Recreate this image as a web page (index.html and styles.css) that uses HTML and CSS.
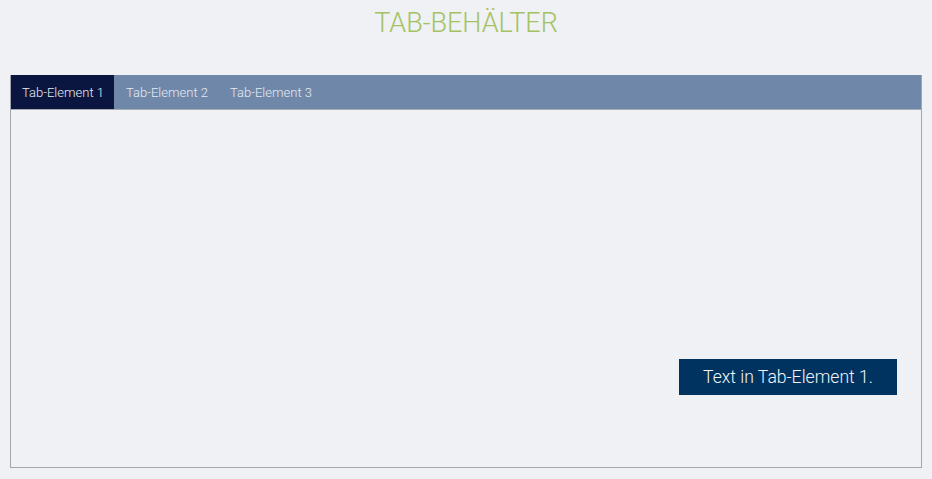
FILE: index.html
```html
<!DOCTYPE html>
<html lang="de">
<head>
<meta charset="utf-8">
<title>Tab-Behälter</title>
<link rel="stylesheet" href="styles.css">
</head>
<body>
  <h1 class="title">TAB-BEHÄLTER</h1>
  <div class="tabs">
    <div class="tab-bar">
      <div class="tab active">Tab-Element 1</div>
      <div class="tab">Tab-Element 2</div>
      <div class="tab">Tab-Element 3</div>
    </div>
    <div class="tab-panel">
      <div class="panel-text">Text in Tab-Element 1.</div>
    </div>
  </div>
</body>
</html>
```
FILE: styles.css
```css
html, body {
  margin: 0;
  padding: 0;
  background: #eff1f5;
  font-family: Roboto, "Liberation Sans", sans-serif;
}

body {
  padding: 0 10px 10px 10px;
}

.title {
  margin: 0;
  height: 75px;
  padding-top: 7px;
  box-sizing: border-box;
  text-align: center;
  font-size: 27px;
  font-weight: 300;
  line-height: 32px;
  color: #a5c262;
}

.tabs {
  border: 1px solid #a2a6ad;
  border-top: none;
}

.tab-bar {
  display: flex;
  height: 34px;
  background: #6f87a9;
  border-bottom: 1px solid #a7abb2;
}

.tab {
  width: 104px;
  box-sizing: border-box;
  padding: 2px 0 0 12px;
  font-size: 13px;
  font-weight: 300;
  line-height: 32px;
  color: #e6ebf3;
  white-space: nowrap;
}

.tab.active {
  width: 103px;
  padding-left: 11px;
  background: #0b1640;
  color: #e8ecf5;
}

.tab-panel {
  height: 357px;
  box-sizing: border-box;
  display: flex;
  justify-content: flex-end;
  align-items: flex-start;
  padding: 249px 24px 0 0;
}

.panel-text {
  width: 218px;
  height: 36px;
  background: #003360;
  color: #f2f5fa;
  font-size: 17.6px;
  font-weight: 300;
  line-height: 37px;
  text-align: center;
}
```
